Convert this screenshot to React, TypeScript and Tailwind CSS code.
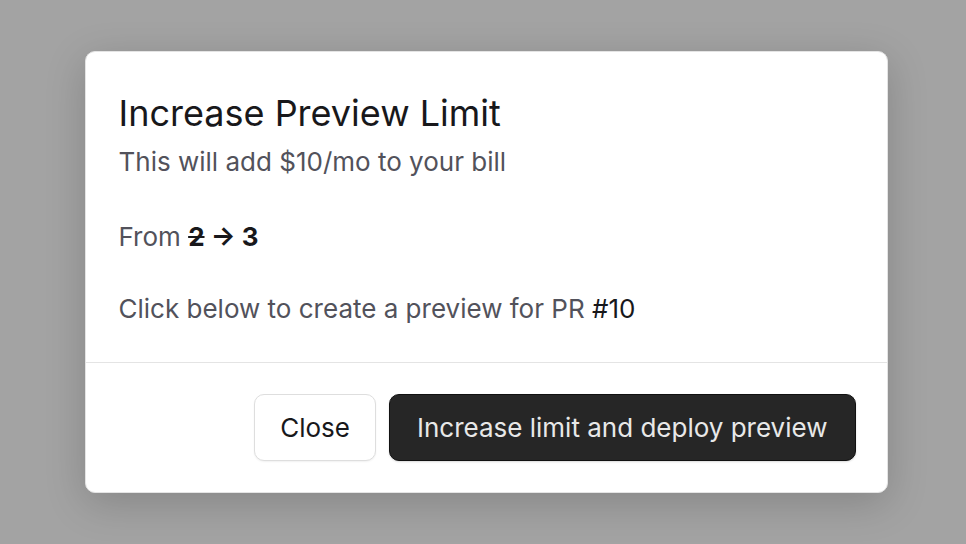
export default function App() {
  return (
    <div
      className="w-[966px] h-[544px] bg-[#a3a3a3] flex items-center justify-center pl-[6px]"
      style={{ fontFamily: 'Inter, "Liberation Sans", sans-serif' }}
    >
      <div className="w-[803px] bg-white rounded-[10px] border border-[#e4e4e4] shadow-[0_10px_40px_rgba(0,0,0,0.18)]">
        {/* Body */}
        <div className="px-[33px] pt-[41px] pb-[35px]">
          <h2 className="text-[36px] leading-[40px] text-[#18181b] font-normal">Increase Preview Limit</h2>
          <p className="mt-[11px] text-[26px] leading-[36px] text-[#52525b]">This will add $10/mo to your bill</p>
          <p className="mt-[39px] text-[26px] leading-[36px] text-[#52525b]">
            From{' '}
            <span className="font-bold text-[#18181b]">
              <s>2</s> → 3
            </span>
          </p>
          <p className="mt-[36px] text-[26px] leading-[36px] text-[#52525b]">
            Click below to create a preview for PR <span className="text-[#18181b]">#10</span>
          </p>
        </div>

        {/* Footer */}
        <div className="border-t border-[#e4e4e4] px-[31px] pt-[31px] pb-[31px] flex justify-end gap-[13px]">
          <button className="h-[67px] px-[25px] rounded-[10px] border border-[#dedede] bg-white text-[26px] text-[#18181b] shadow-[0_1px_2px_rgba(0,0,0,0.06)]">
            Close
          </button>
          <button className="h-[67px] px-[27px] rounded-[10px] border border-[#111] bg-[#262626] text-[26px] text-[#e8e8e8] shadow-[0_1px_2px_rgba(0,0,0,0.15)]">
            Increase limit and deploy preview
          </button>
        </div>
      </div>
    </div>
  )
}
